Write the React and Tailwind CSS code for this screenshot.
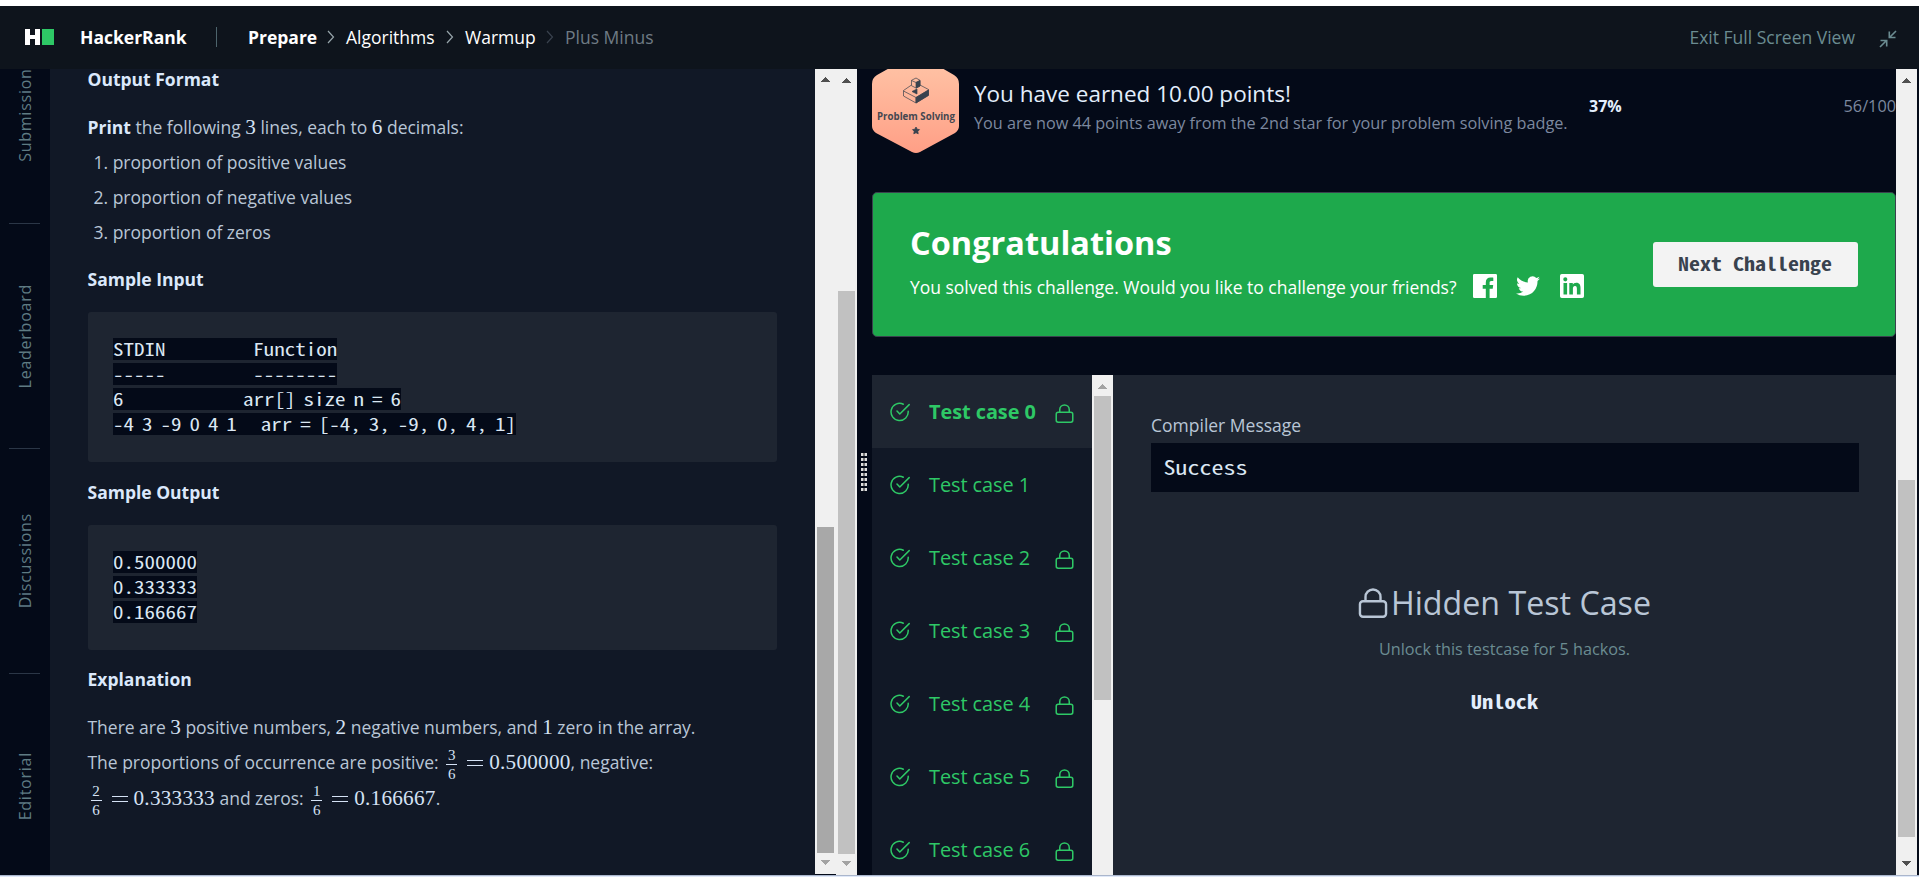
import React from "react";

const MONO = "font-['Noto_Sans_Mono_CJK_SC','Liberation_Mono',monospace]";

function Tri({ down, color }) {
  return (
    <svg width="9" height="5" viewBox="0 0 9 5" shapeRendering="crispEdges" className="shrink-0" fill={color}>
      <path d={down ? "M0 0h9L4.5 5z" : "M0 5h9L4.5 0z"} />
    </svg>
  );
}

function Scrollbar({ up, down, thumb, top, bar, upY = 9, downY = 9, className }) {
  return (
    <div className={"flex w-[21px] shrink-0 flex-col items-center bg-[#f0f0f0] " + className}>
      <div className="shrink-0" style={{ height: upY }} />
      <Tri color={up} />
      <div className="shrink-0" style={{ height: top - upY - 5 }} />
      <div className="w-[17px] shrink-0" style={{ height: bar, background: thumb }} />
      <div className="flex-1" />
      {down && (
        <div className="shrink-0" style={{ paddingBottom: downY }}>
          <Tri down color={down} />
        </div>
      )}
    </div>
  );
}

function Chevron({ className }) {
  return (
    <svg width="8" height="14" viewBox="0 0 8 14" fill="none" stroke="currentColor" strokeWidth="1.2" className={className}>
      <path d="M1 1l5.5 6L1 13" />
    </svg>
  );
}

function Lock({ size, className }) {
  return (
    <svg width={size} height={size} viewBox="0 0 20 20" fill="none" stroke="currentColor" strokeWidth="1.6" className={className}>
      <rect x="1.3" y="8.800" width="17.400" height="10.400" rx="2" />
      <path d="M5 8.800V6a5 5 0 0 1 10 0v2.800" />
    </svg>
  );
}

function Check() {
  return (
    <svg width="20" height="20" viewBox="0 0 20 20" fill="none" stroke="#2ec866" strokeWidth="1.500" strokeLinecap="round" strokeLinejoin="round" className="shrink-0">
      <path d="M13.300 2.200A8.600 8.600 0 1 0 18.200 9.200" />
      <path d="M7 9l2.800 3L19.200 2.600" />
    </svg>
  );
}

function Header() {
  return (
    <header className="flex h-[63px] shrink-0 items-center bg-[#0e141c] pb-px text-[17.500px] text-white">
      <svg width="30" height="18" viewBox="0 0 30 18" className="ml-[25px] shrink-0">
        <path d="M0 1h5v6h5V1h5v16h-5v-6H5v6H0z" fill="#fff" />
        <rect x="17" y="1" width="12" height="16" fill="#2ec866" />
      </svg>
      <span className="ml-[25px] w-[136px] font-bold">HackerRank</span>
      <span className="h-5 w-px bg-[#4d646c]" />
      <span className="ml-[31px] w-[79px] font-bold">Prepare</span>
      <Chevron className="mr-[11px] text-[#97a5ab]" />
      <span className="w-[100px]">Algorithms</span>
      <Chevron className="mr-[11px] text-[#97a5ab]" />
      <span className="w-[81px]">Warmup</span>
      <Chevron className="mr-[11px] text-[#39424e]" />
      <span className="text-[#6f7b84]">Plus Minus</span>
      <span className="ml-auto text-[#6b8c91]">Exit Full Screen View</span>
      <svg width="18" height="18" viewBox="0 0 18 18" fill="none" stroke="#6b8c91" strokeWidth="1.600" className="mr-[22px] ml-6 mt-1">
        <path d="M17 1l-6.500 6.500M10.300 1.500v6h6.200M1 17l6.500-6.500M7.700 16.500v-6H1.500" />
      </svg>
    </header>
  );
}

function RailTab({ label }) {
  return (
    <div className="flex h-[225px] w-[50px] shrink-0 flex-col items-center">
      <div className="flex flex-1 items-center">
        <span className="rotate-180 text-[16px] leading-[50px] tracking-[0.750px] text-[#5f7b83] [writing-mode:vertical-rl]">{label}</span>
      </div>
      <div className="mr-px h-px w-[31px] bg-[#2b3646]" />
    </div>
  );
}

function Rail() {
  return (
    <nav className="w-[50px] shrink-0 overflow-hidden bg-[#040a18]">
      <div className="-mt-[70px] flex flex-col">
        <RailTab label="Submissions" />
        <RailTab label="Leaderboard" />
        <RailTab label="Discussions" />
        <div className="h-[224px] overflow-hidden">
          <RailTab label="Editorial" />
        </div>
      </div>
    </nav>
  );
}

function M({ children }) {
  return <span className="font-['Liberation_Serif',serif] text-[21.200px] leading-none text-[#d5e2f5]">{children}</span>;
}

function Eq({ children }) {
  return (
    <>
      <span className="mr-[6px] inline-block h-[6px] w-[16px] border-y border-[#d5e2f5] align-[3px]" />
      <span className="tracking-[0.250px]"><M>{children}</M></span>
    </>
  );
}

function Frac({ a, b }) {
  return (
    <span className="mr-[10px] ml-[3px] inline-flex flex-col items-center align-middle font-['Liberation_Serif',serif] text-[15px] text-[#d5e2f5]">
      <span className="h-[15px] leading-[15px]">{a}</span>
      <span className="my-[1px] h-px w-[11px] bg-[#d5e2f5]" />
      <span className="h-[15px] leading-[17px]">{b}</span>
    </span>
  );
}

function CodeLine({ children }) {
  return (
    <div className="flex h-[25px] items-center">
      <span className="h-[22px] bg-[#040a18] leading-[22px]">
        <span className={"inline-block scale-y-[0.83] align-top text-[21px] leading-[21px] whitespace-pre text-[#dbe7f3] [word-spacing:-2.530px] " + MONO}>{children}</span>
      </span>
    </div>
  );
}

function Problem() {
  return (
    <section className="flex w-[765px] shrink-0 flex-col overflow-hidden bg-[#111826] pr-[38px] text-[17.500px] leading-[35px] text-[#b9c6d6]">
      <h3 className="-mt-[7px] pl-[37.500px] font-bold text-[#dbe8fb]">Output Format</h3>
      <p className="mt-[13px] pl-[37.500px]"><b className="text-[#dbe8fb]">Print</b> the following <M>3</M> lines, each to <M>6</M> decimals:</p>
      <ol className="pl-[43.500px]">
        <li>1. proportion of positive values</li>
        <li>2. proportion of negative values</li>
        <li>3. proportion of zeros</li>
      </ol>
      <h3 className="mt-[12px] pl-[37.500px] font-bold text-[#dbe8fb]">Sample Input</h3>
      <div className="mt-[15px] ml-[38px] h-[150px] shrink-0 rounded-[3px] bg-[#1e2531] px-[25px] pt-[24px]">
        <CodeLine>{"STDIN           Function"}</CodeLine>
        <CodeLine>{"-----           --------"}</CodeLine>
        <CodeLine>{"6               arr[] size n = 6"}</CodeLine>
        <CodeLine>{"-4 3 -9 0 4 1   arr = [-4, 3, -9, 0, 4, 1]"}</CodeLine>
      </div>
      <h3 className="mt-[13px] pl-[37.500px] font-bold text-[#dbe8fb]">Sample Output</h3>
      <div className="mt-[15px] ml-[38px] h-[125px] shrink-0 rounded-[3px] bg-[#1e2531] px-[25px] pt-[24px]">
        <CodeLine>0.500000</CodeLine>
        <CodeLine>0.333333</CodeLine>
        <CodeLine>0.166667</CodeLine>
      </div>
      <h3 className="mt-[12px] pl-[37.500px] font-bold text-[#dbe8fb]">Explanation</h3>
      <div className="mt-[13px] pl-[37.500px] tracking-[-0.020px] whitespace-nowrap">
        <p className="h-[35px]">There are <M>3</M> positive numbers, <M>2</M> negative numbers, and <M>1</M> zero in the array.</p>
        <p className="h-[36px]">The proportions of occurrence are positive: <Frac a="3" b="6" /><Eq>0.500000</Eq>, negative:</p>
        <p className="h-[35px]"><Frac a="2" b="6" /><Eq>0.333333</Eq> and zeros: <Frac a="1" b="6" /><Eq>0.166667</Eq>.</p>
      </div>
    </section>
  );
}

function Badge() {
  return (
    <svg width="88" height="112" viewBox="0 0 88 112" className="-mt-[15px] shrink-0">
      <defs>
        <linearGradient id="g" x1="0" y1="0" x2="0" y2="1">
          <stop offset="0" stopColor="#ffc6a8" />
          <stop offset="1" stopColor="#ff9f86" />
        </linearGradient>
      </defs>
      <path d="M39 2q5-3 10 0l33 19q5 3 5 9v42q0 4-4 7L48 98q-4 2-8 0L4 79q-4-3-4-7V30q0-6 5-9z" fill="url(#g)" />
      <g fill="none" stroke="#39424e" strokeWidth="0.700">
        <path d="M39.500 31.500V26.300l4.500-2.300 4 2.300v5.700l-4 2-4.500-2.300zM39.500 26.500l4.500 2 4-2M39.500 31l-8 5.500v5.500l12.500 7 12.500-8v-5.500L48 31M31.500 37l12.500 6.500 12.500-7.500M44 43.500V49" />
        <path d="M44 28.500l4-2v5.500l-4 2.200zM44 43.500l12.500-7.500v5.500L44 49zM40 37.500l5-2.500v5z" fill="#39424e" />
      </g>
      <text x="44" y="66" textAnchor="middle" fontSize="9.700" fontWeight="700" fill="#454750" fontFamily="Open Sans, sans-serif">Problem Solving</text>
      <path d="M44 73l1.100 2.200 2.400.4-1.700 1.700.4 2.500-2.200-1.100-2.200 1.100.4-2.500-1.700-1.700 2.400-.4z" fill="#39424e" stroke="#39424e" strokeWidth="0.800" />
    </svg>
  );
}

function Congrats() {
  return (
    <div className="mt-[24px] flex h-[145px] shrink-0 items-center rounded-[5px] border border-[#39424e] bg-[#1ea94c] pr-[37px] pl-[37px] text-white">
      <div className="flex flex-col pb-[3px]">
        <h1 className="text-[32.500px] leading-[44px] font-bold">Congratulations</h1>
        <div className="mt-[5px] flex h-[36px] items-center text-[17.500px]">
          <span className="w-[563px] tracking-[-0.015px] whitespace-nowrap">You solved this challenge. Would you like to challenge your friends?</span>
          <svg width="24" height="24" viewBox="0 0 24 24" className="-mt-1 shrink-0" fill="#fff">
            <path d="M1.300 0h21.400Q24 0 24 1.300v21.400q0 1.300-1.300 1.300h-6.100v-9.300h3.100l.5-3.600h-3.600V8.800c0-1.100.3-1.800 1.800-1.800h1.900V3.700c-.3 0-1.500-.1-2.800-.1-2.800 0-4.700 1.700-4.700 4.800v2.700H9.700v3.600h3.100V24H1.300Q0 24 0 22.700V1.300Q0 0 1.300 0z" />
          </svg>
          <svg width="24" height="24" viewBox="0 0 24 24" className="-mt-1 ml-[19px] shrink-0" fill="#fff">
            <path d="M24 4.600c-.9.400-1.800.7-2.800.8 1-.6 1.800-1.600 2.200-2.700-1 .6-2 1-3.100 1.200a4.900 4.900 0 0 0-8.400 4.500C7.700 8.200 4.100 6.300 1.700 3.200a4.900 4.900 0 0 0 1.500 6.600c-.8 0-1.600-.2-2.200-.6v.1c0 2.400 1.700 4.400 3.900 4.800-.7.200-1.500.2-2.200.1.600 2 2.400 3.400 4.600 3.400A9.900 9.900 0 0 1 0 19.500a14 14 0 0 0 7.500 2.200c9.100 0 14-7.500 14-14v-.6c1-.7 1.800-1.600 2.500-2.500z" />
          </svg>
          <svg width="24" height="24" viewBox="0 0 24 24" className="-mt-1 ml-[20px] shrink-0" fill="#fff">
            <path fillRule="evenodd" d="M1.800 0h20.400Q24 0 24 1.800v20.400q0 1.800-1.800 1.800H1.800Q0 24 0 22.200V1.800Q0 0 1.800 0zM3.500 9v11.500h3.600V9zM5.300 3.300a2.050 2.050 0 1 0 0 4.100 2.050 2.050 0 1 0 0-4.100zM9.300 9v11.500h3.600v-5.700c0-1.500.3-2.900 2.100-2.900s1.900 1.700 1.900 3v5.600h3.600v-6.300c0-3.100-.7-5.500-4.300-5.500-1.700 0-2.900 1-3.400 1.900V9z" />
          </svg>
        </div>
      </div>
      <button className={"ml-auto h-[45px] w-[205px] rounded-[3px] bg-[#f3f3f3] pr-px pb-[3px] text-[22px] leading-[42px] font-bold whitespace-nowrap text-[#39424e] " + MONO}>
        <span className="inline-block scale-y-[0.83]">Next Challenge</span>
      </button>
    </div>
  );
}

function TestCases() {
  return (
    <ul className="h-[500px] w-[220px] shrink-0 overflow-hidden bg-[#111826] text-[19.900px] text-[#2ec866]">
      {[0, 1, 2, 3, 4, 5, 6].map((n) => (
        <li key={n} className={"flex h-[73px] items-center pl-[18px] " + (n === 0 ? "bg-[#1e2531] font-bold" : "")}>
          <Check />
          <span className="ml-[19px] w-[126px] tracking-[-0.050px] whitespace-nowrap">Test case {n}</span>
          {n !== 1 && <Lock size={19} className="mt-[3px]" />}
        </li>
      ))}
    </ul>
  );
}

function Detail() {
  return (
    <div className="flex h-[500px] flex-1 flex-col bg-[#1e2531] px-[37px]">
      <div className="ml-px mt-[36px] text-[17.500px] leading-[28px] text-[#b9c6d6]">Compiler Message</div>
      <div className={"mt-[4px] ml-px h-[49px] shrink-0 bg-[#040a18] pl-[12.500px] text-[24px] leading-[48px] text-[#dbe7f3] " + MONO}>
        <span className="inline-block scale-y-[0.83]">Success</span>
      </div>
      <div className="mt-[86px] flex flex-col items-center">
        <div className="flex items-center text-[32.200px] leading-[50px] text-[#b9c6d6]">
          <Lock size={30} className="mr-[3px]" />
          Hidden Test Case
        </div>
        <div className="mt-[10px] text-[16.250px] leading-[22px] text-[#6b8c91]">Unlock this testcase for 5 hackos.</div>
        <div className={"mt-[26px] text-[22.500px] leading-[30px] font-bold text-[#e3eefc] " + MONO}>
          <span className="inline-block scale-y-[0.83]">Unlock</span>
        </div>
      </div>
    </div>
  );
}

function Results() {
  return (
    <main className="flex w-[1024px] shrink-0 flex-col overflow-hidden">
      <div className="flex h-[99px] shrink-0 items-start">
        <Badge />
        <div className="mt-[8px] ml-[14px] w-[615px] whitespace-nowrap">
          <div className="text-[22.500px] leading-[34px] text-[#e3eefc]">You have earned 10.00 points!</div>
          <div className="text-[16.250px] leading-[24px] tracking-[-0.015px] text-[#7c889f]">You are now 44 points away from the 2nd star for your problem solving badge.</div>
        </div>
        <span className="mt-[25px] text-[16px] leading-[24px] font-bold text-[#e3eefc]">37%</span>
        <span className="mt-[25px] ml-auto text-[16.250px] leading-[24px] text-[#7c889f]">56/100</span>
      </div>
      <Congrats />
      <div className="mt-[38px] flex shrink-0">
        <TestCases />
        <Scrollbar className="h-[500px]" up="#a3a3a3" thumb="#c1c1c1" top={21} bar={304} />
        <Detail />
      </div>
    </main>
  );
}

export default function App() {
  return (
    <div className="flex h-[877px] w-[1919px] flex-col overflow-hidden bg-white pt-[6px] font-['Open_Sans',sans-serif]">
      <Header />
      <div className="flex h-[806px] shrink-0 bg-[#040a18]">
        <Rail />
        <Problem />
        <Scrollbar className="h-[805px]" up="#505050" down="#a3a3a3" thumb="#a8a8a8" top={458} bar={326} upY={8} />
        <Scrollbar className="h-[806px]" up="#505050" down="#a3a3a3" thumb="#c1c1c1" top={222} bar={563} />
        <div className="flex w-[15px] shrink-0 flex-col gap-[2px] pt-[384px] pl-[4px]">
          {[0, 1, 2, 3, 4, 5, 6, 7].map((i) => (
            <div key={i} className="flex h-[3px] w-[6px] shrink-0 justify-between bg-[#777]">
              <i className="h-[3px] w-[2px] bg-[#ddd]" />
              <i className="h-[3px] w-[2px] bg-[#ddd]" />
            </div>
          ))}
        </div>
        <Results />
        <Scrollbar className="h-[806px]" up="#505050" down="#505050" thumb="#c1c1c1" top={411} bar={357} />
      </div>
      <div className="h-px bg-[#aab6cc]" />
      <div className="h-px bg-[#dfe8f8]" />
    </div>
  );
}
